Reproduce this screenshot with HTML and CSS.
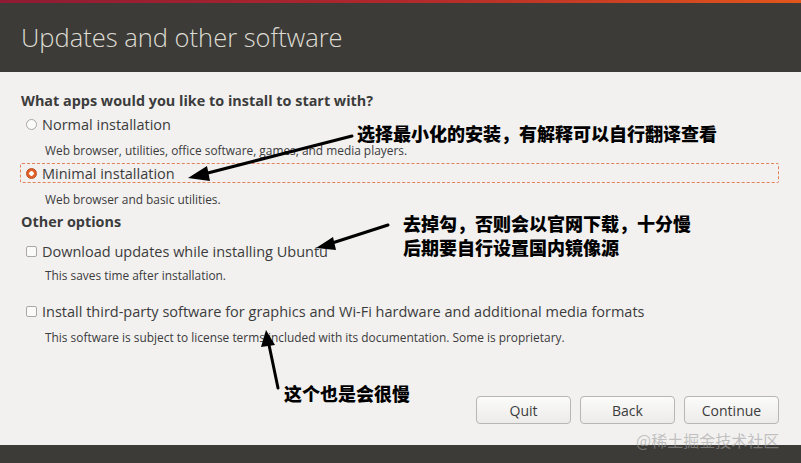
FILE: index.html
```html
<!DOCTYPE html>
<html lang="en">
<head>
  <meta charset="UTF-8">
  <title>Install</title>
  <link rel="stylesheet" href="styles.css">
</head>
<body>
  <div class="window">
    <div class="topline"></div>
    <div class="header">
      <div class="title">Updates and other software</div>
    </div>

    <div class="content">
      <div class="section-title">What apps would you like to install to start with?</div>

      <div class="option first">
        <span class="radio"></span>
        <span class="label">Normal installation</span>
      </div>
      <div class="desc">Web browser, utilities, office software, games, and media players.</div>

      <div class="option focused">
        <span class="radio checked"></span>
        <span class="label">Minimal installation</span>
      </div>
      <div class="desc">Web browser and basic utilities.</div>

      <div class="section-title other">Other options</div>

      <div class="option check-first">
        <span class="check"></span>
        <span class="label">Download updates while installing Ubuntu</span>
      </div>
      <div class="desc short">This saves time after installation.</div>

      <div class="option check-second">
        <span class="check"></span>
        <span class="label">Install third-party software for graphics and Wi-Fi hardware and additional media formats</span>
      </div>
      <div class="desc">This software is subject to license terms included with its documentation. Some is proprietary.</div>

      <div class="buttons">
        <button class="btn">Quit</button>
        <button class="btn">Back</button>
        <button class="btn">Continue</button>
      </div>
    </div>

    <div class="footer"></div>

    <!-- 주석 (annotations) -->
    <svg class="arrows" width="801" height="463" viewBox="0 0 801 463">
      <g stroke="#000" stroke-width="3" fill="none" stroke-linecap="round">
        <line x1="352" y1="136" x2="200" y2="175"/>
        <line x1="388" y1="225" x2="326" y2="245"/>
        <line x1="278" y1="388" x2="268" y2="340"/>
      </g>
      <g fill="#000">
        <polygon points="188,178 207,166 210,181"/>
        <polygon points="316,248 333,237 336,250"/>
        <polygon points="266,330 275,345 261,347"/>
      </g>
    </svg>
    <div class="note note1">选择最小化的安装，有解释可以自行翻译查看</div>
    <div class="note note2">去掉勾，否则会以官网下载，十分慢<br>后期要自行设置国内镜像源</div>
    <div class="note note3">这个也是会很慢</div>
    <div class="watermark">@稀土掘金技术社区</div>
  </div>
</body>
</html>
```

FILE: styles.css
```css
body {
  margin: 0;
  font-family: "Open Sans", "DejaVu Sans", sans-serif;
  color: #3c3c3c;
}

.window {
  position: relative;
  width: 801px;
  height: 463px;
  display: flex;
  flex-direction: column;
  overflow: hidden;
}

.topline {
  height: 3px;
  background: linear-gradient(90deg, #8e1b33, #b0282c 50%, #e3561b);
}

.header {
  height: 69px;
  background-color: #3c3b37;
  padding-left: 21px;
  box-sizing: border-box;
}

.title {
  color: #dedbd3;
  font-size: 25.5px;
  font-weight: 300;
  line-height: 32px;
  padding-top: 18px;
}

.content {
  flex: 1;
  background-color: #f2f1f0;
  padding: 20px 22px 21px 21px;
  display: flex;
  flex-direction: column;
}

.section-title {
  font-size: 14.4px;
  font-weight: 700;
  line-height: 18px;
}

.section-title.other {
  margin-top: 6px;
}

.option {
  display: flex;
  align-items: center;
  height: 20px;
  font-size: 14.5px;
  padding-left: 6px;
  margin-left: -1px;
  box-sizing: border-box;
}

.option.first {
  margin-top: 4px;
}

.option.focused {
  margin-top: 5px;
  border: 1px dashed #e0825a;
  border-radius: 2px;
  padding-left: 5px;
}

.option.check-first {
  margin-top: 10px;
}

.option.check-second {
  margin-top: 18px;
}

.option .label {
  margin-left: 5px;
  white-space: nowrap;
}

.radio {
  width: 11px;
  height: 11px;
  border-radius: 50%;
  border: 1px solid #a9a7a2;
  background: #fbfbfa;
  box-sizing: border-box;
}

.radio.checked {
  border: 1px solid #b84a1d;
  background: radial-gradient(circle, #fff 0 2px, #e2612a 2.5px);
}

.check {
  width: 11px;
  height: 11px;
  border-radius: 2px;
  border: 1px solid #aaa8a3;
  background: #fafaf9;
  box-sizing: border-box;
}

.desc {
  font-size: 11.9px;
  line-height: 16px;
  margin-top: 8px;
  padding-left: 24px;
  white-space: nowrap;
}

.desc.short {
  margin-top: 6px;
}

.buttons {
  margin-top: auto;
  display: flex;
  justify-content: flex-end;
  gap: 9px;
}

.btn {
  width: 95px;
  height: 28px;
  font-family: "Open Sans", "DejaVu Sans", sans-serif;
  font-size: 14px;
  color: #3c3c3c;
  background: linear-gradient(#fbfbfa, #ecebe9);
  border: 1px solid #b8b6b1;
  border-radius: 4px;
  padding: 0;
}

.footer {
  height: 18px;
  background-color: #3c3b37;
}

/* 주석 */
.arrows {
  position: absolute;
  left: 0;
  top: 0;
}

.note {
  position: absolute;
  font-family: "Noto Sans CJK SC", sans-serif;
  font-weight: 900;
  font-size: 18px;
  line-height: 24px;
  color: #000;
}

.note1 {
  left: 357px;
  top: 121px;
}

.note2 {
  left: 403px;
  top: 211px;
}

.note3 {
  left: 284px;
  top: 381px;
}

.watermark {
  position: absolute;
  left: 636px;
  top: 428px;
  font-family: "Noto Sans CJK SC", sans-serif;
  font-size: 16px;
  color: rgba(160, 160, 160, 0.6);
}
```
